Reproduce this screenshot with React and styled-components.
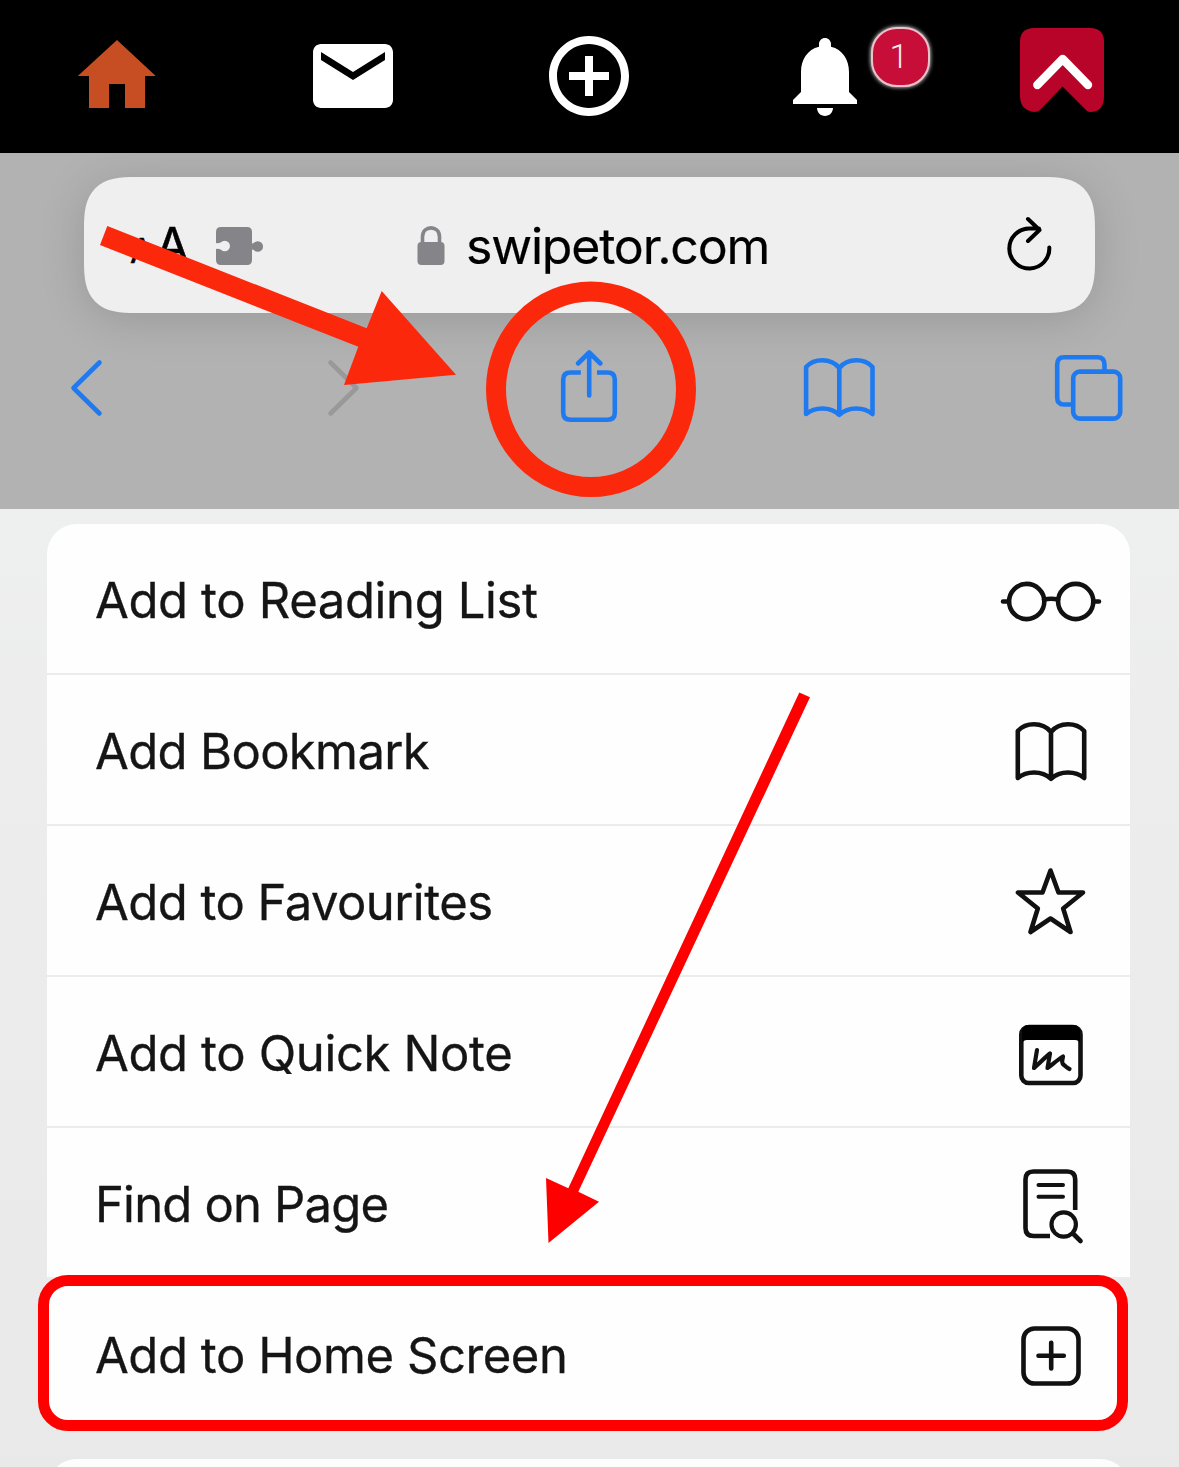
import React from "react";
import styled, { createGlobalStyle } from "styled-components";

const GlobalStyle = createGlobalStyle`
  * { box-sizing: border-box; }
  body {
    margin: 0;
    background: #ebecec;
    font-family: Inter, "Liberation Sans", sans-serif;
  }
  svg { display: block; flex: none; overflow: visible; }
`;

const Page = styled.div`
  width: 1179px;
  height: 1467px;
  overflow: hidden;
  display: flex;
  flex-direction: column;
`;

/* ---------- app navigation ---------- */

const AppBar = styled.nav`
  height: 153px;
  flex: none;
  display: grid;
  grid-template-columns: 234px 238px 234px 238px 235px;
  background: #000;
`;

const AppBarItem = styled.div`
  position: relative;
  display: flex;
  align-items: center;
  justify-content: center;
  padding-bottom: 1px;
  color: ${(p) => p.$color || "#fff"};
`;

const Glyph = styled.svg.attrs({ viewBox: "0 0 24 24" })`
  width: 96px;
  height: 96px;
  fill: currentColor;
`;

const Logo = styled.svg`
  width: 84px;
  height: 84px;
  margin-bottom: 12px;
`;

const Badge = styled.span`
  position: absolute;
  left: 165px;
  top: 27px;
  width: 59px;
  height: 60px;
  border-radius: 26px;
  border: 2px solid #eec0ca;
  background: #c60e38;
  box-shadow: 0 0 4px 0 #fff;
  color: #ffe9ee;
  display: flex;
  align-items: center;
  justify-content: center;
  padding: 0 3px 3px 0;
  font: 300 34px Roboto, sans-serif;
`;

/* ---------- browser toolbar ---------- */

const BrowserBar = styled.section`
  position: relative;
  height: 356px;
  flex: none;
  display: flex;
  flex-direction: column;
  padding: 24px 51px 0 46px;
  background: #b2b2b2;
`;

const AddressField = styled.div`
  height: 136px;
  margin: 0 33.5px 0 38px;
  display: flex;
  align-items: center;
  padding: 0 43px 0 46px;
  border-radius: 39px;
  background: #efefef;
  box-shadow: 0 6px 46px rgba(0, 0, 0, 0.15);

  @supports (corner-shape: superellipse(1.5)) {
    border-radius: 52px;
    corner-shape: superellipse(1.5);
  }
`;

const LeadingTools = styled.div`
  width: 287px;
  display: flex;
  align-items: center;
  padding-top: 2px;
`;

const TextSize = styled.span`
  width: 86px;
  display: flex;
  align-items: baseline;
  line-height: 60px;
  padding-top: 4px;
  color: #000;
`;

const Letter = styled.span`
  font-size: ${(p) => p.$size}px;
  margin-right: 2px;
  -webkit-text-stroke: 0.5px currentColor;
`;

const Address = styled.span`
  margin-left: 21px;
  padding-top: 2px;
  font-size: 50px;
  line-height: 60px;
  letter-spacing: -1.2px;
  color: #000;
  -webkit-text-stroke: 0.2px currentColor;
`;

const Lock = styled.svg`
  margin-top: 2px;
`;

const Reload = styled.svg`
  width: 46px;
  height: 56px;
  margin-left: auto;
`;

const Controls = styled.div`
  margin-top: 35px;
  display: flex;
  justify-content: space-between;
`;

const ControlIcon = styled.svg.attrs({ viewBox: "-40 -40 80 80" })`
  width: 80px;
  height: 80px;
  fill: none;
  stroke: ${(p) => p.$stroke || "#1f7af0"};
  stroke-width: 4.6;
  stroke-linecap: round;
  stroke-linejoin: round;
`;

const Marker = styled.svg`
  position: absolute;
  left: ${(p) => p.$x}px;
  top: ${(p) => p.$y}px;
  pointer-events: none;
`;

/* ---------- share sheet ---------- */

const Sheet = styled.section`
  position: relative;
  flex: 1;
  display: flex;
  flex-direction: column;
  padding: 15px 49px 0 47px;
  background: linear-gradient(180deg, #eeefef 0, #ecedec 200px, #e9e9e9 100%);
`;

const ActionList = styled.div`
  border-radius: 30px 30px 0 0;
  background: #fefefe;
`;

const Action = styled.div`
  height: 151px;
  display: flex;
  align-items: center;
  justify-content: space-between;
  padding: 3px 27px 0 48px;
  border-bottom: 2px solid #ececed;
`;

const HighlightedAction = styled(Action)`
  height: 156px;
  margin: -4px 2px 0 -9px;
  padding: 4px 14px 0 46px;
  border: 11px solid #fe0000;
  border-radius: 30px;
  background: #fefefe;
  flex: none;
`;

const ActionLabel = styled.span`
  padding-top: 1px;
  font-size: 49px;
  line-height: 60px;
  letter-spacing: ${(p) => p.$tracking}px;
  color: #151515;
  -webkit-text-stroke: 0.3px currentColor;
`;

const ActionIcon = styled.svg.attrs({ viewBox: "-52 -48 104 96" })`
  width: 104px;
  height: 96px;
  fill: none;
  stroke: #111;
  stroke-width: 4.6;
  stroke-linecap: round;
  stroke-linejoin: round;
`;

const NextCard = styled.div`
  height: 60px;
  flex: none;
  margin-top: 28px;
  border-radius: 30px 30px 0 0;
  background: #fdfdfd;
`;

const BookShape = () => (
  <path d="M0 -19C-4 -24 -10 -26.7 -17 -26.7C-23 -26.7 -29 -24.5 -33.2 -20V27C-29 23.5 -23 21.5 -17 21.5C-10 21.5 -4 24 0 27.8C4 24 10 21.5 17 21.5C23 21.5 29 23.5 33.2 27V-20C29 -24.5 23 -26.7 17 -26.7C10 -26.7 4 -24 0 -19V27.5" />
);

const actions = [
  {
    label: "Add to Reading List",
    tracking: -0.37,
    icon: (
      <>
        <circle cx="-24.3" cy="1.5" r="17.6" />
        <circle cx="24.7" cy="1.5" r="17.6" />
        <path d="M-48 1.5h5M43 1.5h5M-7 -0.5Q0 -2 7 -0.5" />
      </>
    ),
  },
  { label: "Add Bookmark", tracking: -0.65, icon: <BookShape /> },
  {
    label: "Add to Favourites",
    tracking: -0.55,
    icon: (
      <path d="M-.5 -31.5L7.5 -9.500H32L12.200 6.500L19.500 30L-.5 16.500L-20.500 30L-13.200 6.500L-33 -9.500H-8.500Z" />
    ),
  },
  {
    label: "Add to Quick Note",
    tracking: -0.37,
    icon: (
      <>
        <rect x="-29.7" y="-26" width="59.2" height="56" rx="7.500" />
        <path
          fill="#000"
          stroke="none"
          d="M-29 -9V-20q0 -8 6 -8H23q6 0 6 8V-9Q28 -13 24 -13H-24Q-28 -13 -29 -9Z"
        />
        <path
          strokeWidth="4.2"
          d="M-14 -3L-17 15C-12 11 -7 5 -1 .5L-3.500 15C1 12 6 7 12 3.500C11 8 10.500 10 13 12C15 13.500 16 15 18.500 16"
        />
      </>
    ),
  },
  {
    label: "Find on Page",
    tracking: -0.82,
    icon: (
      <>
        <path
          strokeLinecap="butt"
          d="M24.2 6V-24.500Q24.200 -32.500 16.200 -32.500H-17.500Q-25.500 -32.500 -25.500 -24.500V24Q-25.500 32 -17.500 32H-1"
        />
        <path strokeWidth="4" d="M-12.500 -19H12M-12.500 -7.300H12" />
        <circle cx="12.7" cy="20.500" r="12.200" strokeWidth="4.200" />
        <path d="M22 29.500L29.500 37" />
      </>
    ),
  },
];

export default function App() {
  return (
    <Page>
      <GlobalStyle />
      <AppBar>
        <AppBarItem $color="#c74e22">
          <Glyph>
            <path d="M10 20v-6h4v6h5v-8h2.700L12 3 2.200 12H5v8z" />
          </Glyph>
        </AppBarItem>
        <AppBarItem>
          <Glyph>
            <path d="M20 4H4c-1.100 0-1.990.9-1.990 2L2 18c0 1.100.9 2 2 2h16c1.100 0 2-.9 2-2V6c0-1.100-.9-2-2-2zm0 4l-8 5-8-5V6l8 5 8-5v2z" />
          </Glyph>
        </AppBarItem>
        <AppBarItem>
          <Glyph>
            <path d="M13 7h-2v4H7v2h4v4h2v-4h4v-2h-4V7zm-1-5C6.480 2 2 6.480 2 12s4.480 10 10 10 10-4.480 10-10S17.520 2 12 2zm0 18c-4.410 0-8-3.590-8-8s3.590-8 8-8 8 3.590 8 8-3.590 8-8 8z" />
          </Glyph>
        </AppBarItem>
        <AppBarItem>
          <Glyph>
            <path d="M12 22c1.100 0 2-.9 2-2h-4c0 1.100.89 2 2 2zm6-6v-5c0-3.070-1.640-5.640-4.500-6.320V4c0-.83-.67-1.500-1.500-1.500s-1.500.67-1.500 1.500v.68C7.630 5.360 6 7.920 6 11v5l-2 2v1h16v-1l-2-2z" />
          </Glyph>
          <Badge>1</Badge>
        </AppBarItem>
        <AppBarItem>
          <Logo viewBox="0 0 84 84">
            <path
              fill="#b90429"
              d="M14 0H70Q84 0 84 14V68Q84 84 70 84Q67.500 84 66 82L42.500 58.500L20 82Q18 84 14 84Q0 82 0 68V14Q0 0 14 0Z"
            />
            <path
              d="M17.300 57L42.700 31L68 57"
              fill="none"
              stroke="#fff"
              strokeWidth="8.400"
              strokeLinecap="round"
              strokeLinejoin="round"
            />
          </Logo>
        </AppBarItem>
      </AppBar>

      <BrowserBar>
        <AddressField>
          <LeadingTools>
            <TextSize>
              <Letter $size={34}>A</Letter>
              <Letter $size={49}>A</Letter>
            </TextSize>
            <svg width="48" height="40" viewBox="0 0 48 40">
              <path
                fill="#848489"
                d="M5 1H31Q36 1 36 6V17.500Q37.500 17.500 38 16.800A5.300 5.300 0 1 1 38 24.200Q37.500 23.500 36 23.500V34Q36 39 31 39H5Q0 39 0 34V23Q3 22.500 5 23.800A5.300 5.300 0 1 0 5 16.200Q3 17.500 0 17V6Q0 1 5 1Z"
              />
            </svg>
          </LeadingTools>
          <Lock width="28" height="40" viewBox="0 0 28 40">
            <rect x="0.5" y="16" width="27" height="23" rx="4" fill="#848489" />
            <path
              d="M5.500 17V10.500C5.500 -1 22.500 -1 22.500 10.500V17"
              fill="none"
              stroke="#848489"
              strokeWidth="3.600"
            />
          </Lock>
          <Address>swipetor.com</Address>
          <Reload viewBox="0 0 46 56">
            <path
              d="M43.300 30.500A20 20 0 1 1 23 11.500H33M22 2L33.500 13L22 24"
              fill="none"
              stroke="#000"
              strokeWidth="4"
              strokeLinecap="round"
              strokeLinejoin="round"
            />
          </Reload>
        </AddressField>
        <Controls>
          <ControlIcon>
            <path d="M13.500 -25.500L-12.500 0L13.500 25.500" />
          </ControlIcon>
          <ControlIcon $stroke="#999">
            <path d="M-6.500 -25.500L19.500 0L-6.500 25.500" />
          </ControlIcon>
          <ControlIcon>
            <path
              strokeLinecap="butt"
              d="M-6.200 -15.500H-16.500Q-23.800 -15.500 -23.800 -8.500V24.500Q-23.800 31.700 -16.500 31.700H20.500Q27.800 31.700 27.800 24.500V-8.500Q27.800 -15.500 20.500 -15.500H10"
            />
            <path d="M2.200 7.500V-35M-9 -24.500L2.200 -35.500L13.400 -24.500" />
          </ControlIcon>
          <ControlIcon>
            <g transform="translate(1.300 -1)">
              <BookShape />
            </g>
          </ControlIcon>
          <ControlIcon>
            <path
              strokeLinecap="butt"
              d="M16.500 -18V-23.500Q16.500 -30.700 9.500 -30.700H-24Q-30.800 -30.700 -30.800 -23.500V9.500Q-30.800 16.500 -24 16.500H-16"
            />
            <rect x="-14.800" y="-16.400" width="47" height="47" rx="6.500" />
          </ControlIcon>
        </Controls>
        <Marker $x={0} $y={0} width="720" height="356" viewBox="0 153 720 356">
          <path
            fill="#fc280c"
            d="M107.300 226L366.700 328.300L381.700 291L456 374.700L344 385L358.300 346.700L100 245Z"
          />
          <ellipse
            cx="591"
            cy="389.300"
            rx="95"
            ry="97.800"
            fill="none"
            stroke="#fc280c"
            strokeWidth="20"
          />
        </Marker>
      </BrowserBar>

      <Sheet>
        <ActionList>
          {actions.map((a) => (
            <Action key={a.label}>
              <ActionLabel $tracking={a.tracking}>{a.label}</ActionLabel>
              <ActionIcon>{a.icon}</ActionIcon>
            </Action>
          ))}
        </ActionList>
        <HighlightedAction>
          <ActionLabel $tracking={-0.45}>Add to Home Screen</ActionLabel>
          <ActionIcon>
            <rect x="-27.500" y="-26.500" width="55" height="55" rx="11" />
            <path d="M-12.500 .7H12.800M.2 -12.300V13.500" />
          </ActionIcon>
        </HighlightedAction>
        <NextCard />
        <Marker $x={540} $y={180} width="280" height="560" viewBox="540 689 280 560">
          <path
            fill="#fe0000"
            d="M799.300 692.500L810 697.200L578.300 1191.700L599 1201.800L548.500 1243L546 1178L568.300 1188.200Z"
          />
        </Marker>
      </Sheet>
    </Page>
  );
}
